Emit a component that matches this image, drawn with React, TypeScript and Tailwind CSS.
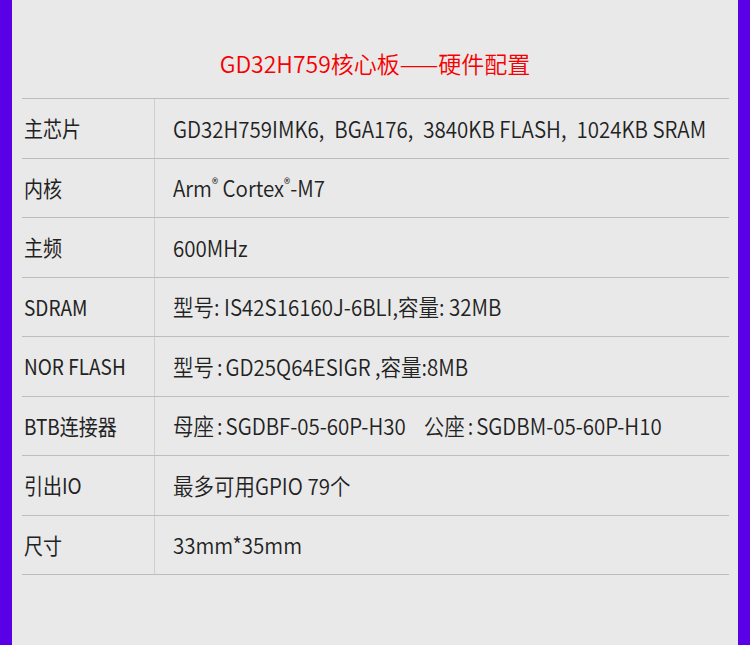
import React from "react";

const Colon = () => <span className="mx-[3px]">:</span>;
const Comma = () => <span className="mr-[10px]">,</span>;
const Reg = () => <span className="relative -top-[7px] text-[13px]">®</span>;

const rows: { label: string; value: React.ReactNode }[] = [
   {
      label: "主芯片",
      value: (
         <>
            GD32H759IMK6<Comma />BGA176<Comma />3840KB FLASH<Comma />1024KB SRAM
         </>
      ),
   },
   {
      label: "内核",
      value: (
         <>
            Arm<Reg /> Cortex<Reg />-M7
         </>
      ),
   },
   { label: "主频", value: "600MHz" },
   { label: "SDRAM", value: "型号: IS42S16160J-6BLI,容量: 32MB" },
   {
      label: "NOR FLASH",
      value: (
         <>
            型号<Colon />GD25Q64ESIGR ,容量:8MB
         </>
      ),
   },
   {
      label: "BTB连接器",
      value: (
         <>
            母座<Colon />SGDBF-05-60P-H30<span className="ml-[18px]">公座</span>
            <Colon />SGDBM-05-60P-H10
         </>
      ),
   },
   { label: "引出IO", value: "最多可用GPIO 79个" },
   { label: "尺寸", value: "33mm*35mm" },
];

export default function App() {
   return (
      <div
         className="flex w-[750px] h-[645px] bg-[#5a00e6]"
         style={{ fontFamily: '"Noto Sans CJK SC", "Noto Sans", sans-serif' }}
      >
         <div className="flex flex-col w-[726px] h-full ml-[12px] bg-[#e9e9e9] px-[10px]">
            <h1 className="h-[98px] pt-[47px] text-center text-[23px] leading-[32px] text-[#f50000] font-[350]">
               GD32H759核心板——硬件配置
            </h1>
            <div className="w-[707px] border-t border-[#bdbdbd]">
               {rows.map((row, i) => (
                  <div key={i} className="flex h-[59.5px] border-b border-[#bdbdbd]">
                     <div className="flex items-center w-[133px] pl-[2px] border-r border-[#cfcfcf] text-[19px] text-[#222]">
                        <span className="inline-block scale-y-[1.12]">{row.label}</span>
                     </div>
                     <div className="flex items-center pl-[18px] text-[20.5px] text-[#222] font-[350]">
                        <span className="inline-block scale-y-[1.1] whitespace-nowrap">{row.value}</span>
                     </div>
                  </div>
               ))}
            </div>
         </div>
      </div>
   );
}
